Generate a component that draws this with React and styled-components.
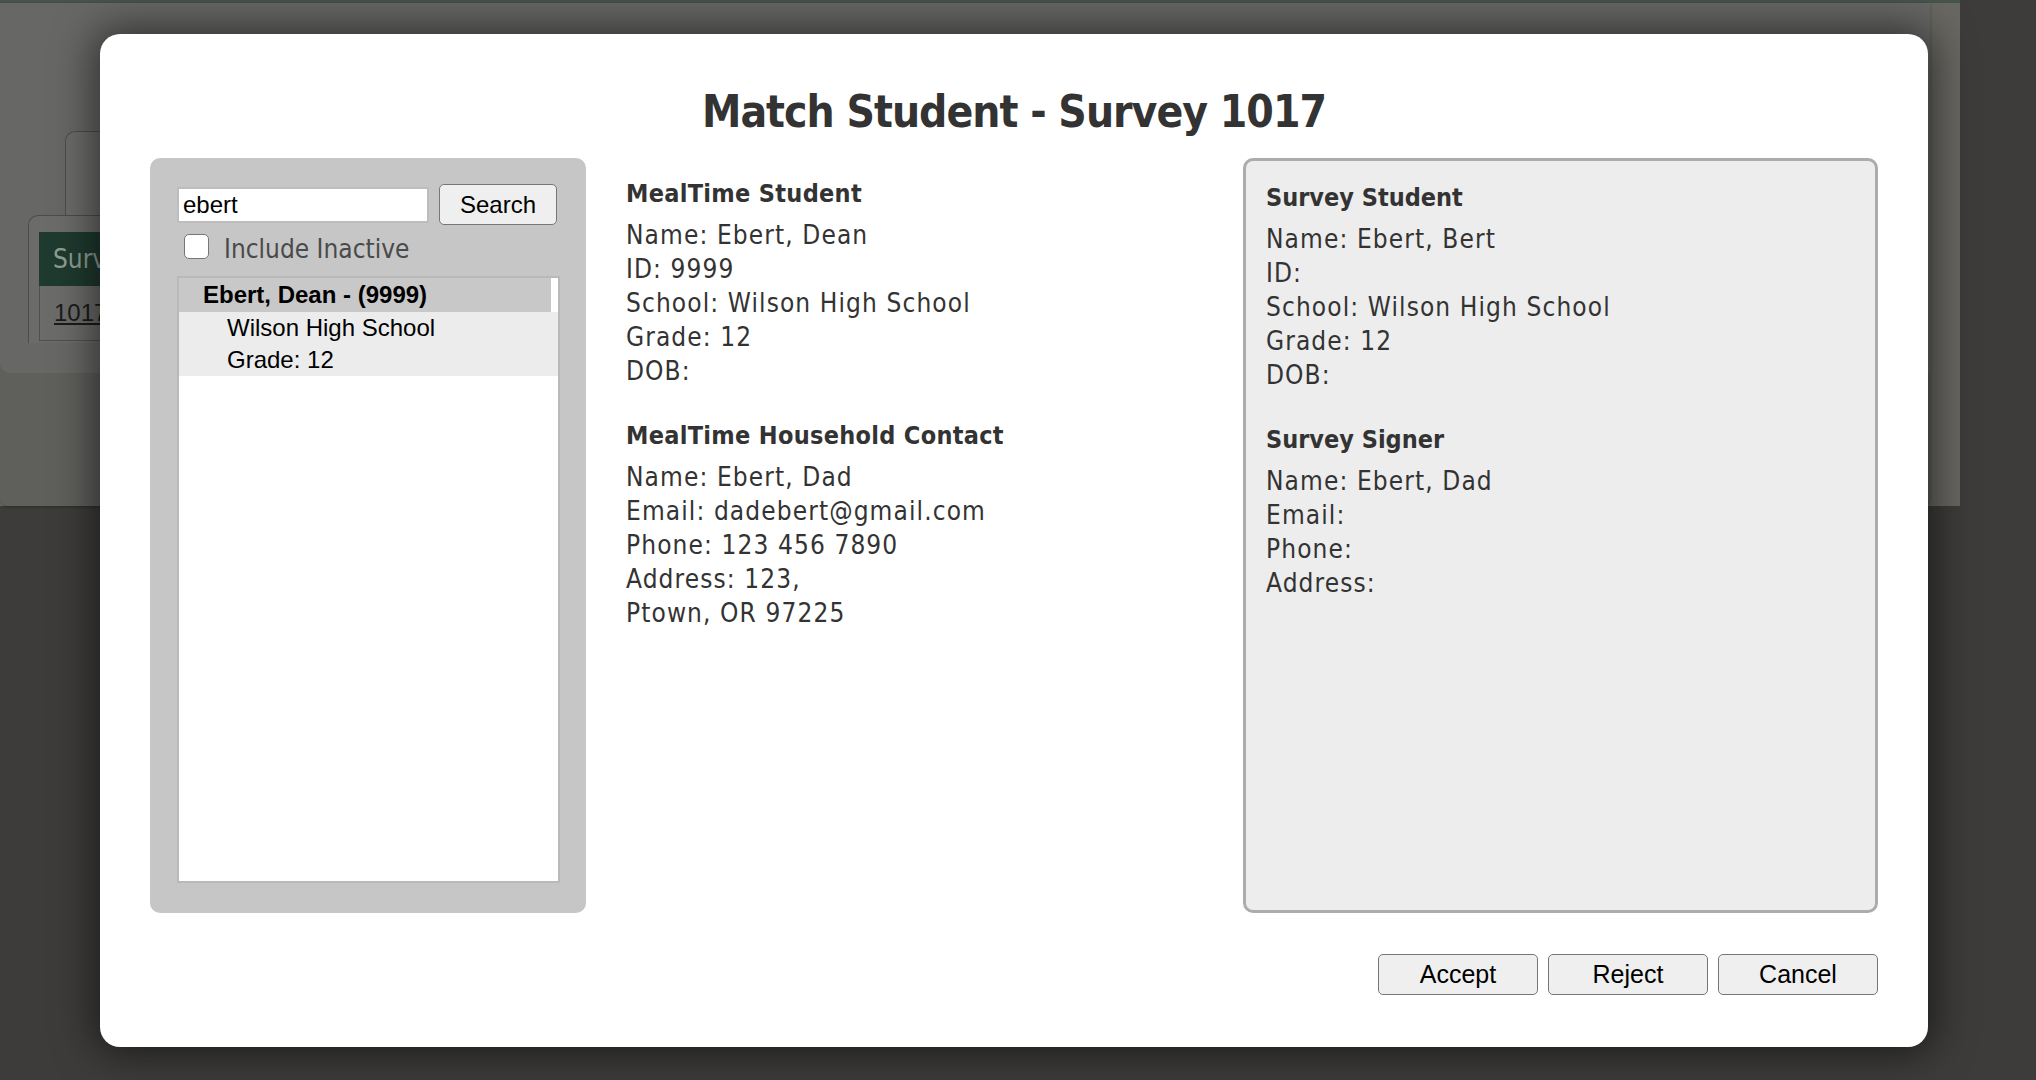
import React from 'react';
import styled, { createGlobalStyle } from 'styled-components';

const SANS = `"DejaVu Sans Condensed", "DejaVu Sans", sans-serif`;
const ARIAL = `"Liberation Sans", Arial, sans-serif`;

const GlobalStyle = createGlobalStyle`
  html, body { margin: 0; padding: 0; }
  body {
    width: 2036px; height: 1080px; overflow: hidden;
    background: #3d3c3a;
    font-family: ${SANS};
  }
  * { box-sizing: border-box; }
`;

const Screen = styled.div`
  position: relative;
  width: 2036px;
  height: 1080px;
`;

const UnderPage = styled.div`
  width: 1960px;
  height: 506px;
  background: #686762;
  border-top: 3px solid #46544d;
`;

const UnderCard = styled.div`
  width: 1930px;
  height: 503px;
  background: #5f5f5c;
  border-radius: 0 0 8px 8px;
  box-shadow: 0 1px 3px rgba(0, 0, 0, 0.3);
`;

const UnderInner = styled.div`
  height: 370px;
  background: #676765;
  border-radius: 0 0 0 10px;
  padding: 128px 0 0 28px;
`;

const UnderTab = styled.div`
  margin-left: 37px;
  width: 420px;
  height: 84px;
  background: #6b6b69;
  border: 1px solid #4c4c4a;
  border-bottom: none;
  border-radius: 10px 0 0 0;
`;

const UnderTabBody = styled.div`
  width: 700px;
  height: 128px;
  background: #6b6b69;
  border-top: 1px solid #4c4c4a;
  border-left: 1px solid #4c4c4a;
  border-radius: 10px 0 0 0;
  padding: 16px 0 0 10px;
`;

const UnderTableHead = styled.div`
  height: 54px;
  background: #1f3a2e;
  color: #8e9d94;
  font: 26px/54px ${SANS};
  padding-left: 14px;
`;

const UnderTableRow = styled.div`
  height: 55px;
  border: 1px solid #505050;
  border-top: none;
  font: 24px/54px ${ARIAL};
  padding-left: 14px;
  color: #1b1b1b;
  text-decoration: underline;
`;

const Modal = styled.div`
  position: absolute;
  left: 100px;
  top: 34px;
  width: 1828px;
  height: 1013px;
  background: #fff;
  border-radius: 20px;
  box-shadow: 0 0 40px 6px rgba(0, 0, 0, 0.55);
  padding: 51px 50px 0;
  display: flex;
  flex-direction: column;
`;

const Title = styled.h1`
  margin: 0 0 19px;
  text-align: center;
  font: bold 44px/54px ${SANS};
  letter-spacing: -1px;
  color: #333;
`;

const Columns = styled.div`
  display: grid;
  grid-template-columns: 436px 1fr 635px;
  height: 755px;
`;

const SearchPanel = styled.div`
  background: #c6c6c6;
  border-radius: 10px;
  padding: 26px 26px 30px 27px;
  display: flex;
  flex-direction: column;
`;

const SearchRow = styled.div`
  display: flex;
  align-items: center;
  gap: 10px;
  height: 41px;
`;

const SearchInput = styled.input`
  width: 252px;
  height: 36px;
  border: 2px solid #bdbdbd;
  background: #fff;
  font: 24px ${ARIAL};
  color: #000;
  padding: 0 4px;
  outline: none;
`;

const PlainButton = styled.button`
  width: ${(p) => p.$w}px;
  height: 41px;
  padding: 0;
  background: #efefef;
  border: 1px solid #767676;
  border-radius: 5px;
  font: ${(p) => p.$fs}px ${ARIAL};
  color: #000;
`;

const CheckRow = styled.label`
  display: flex;
  align-items: center;
  gap: 15px;
  margin-top: 8px;
  padding-left: 7px;
  height: 26px;
`;

const Check = styled.input`
  appearance: none;
  margin: 0;
  width: 25px;
  height: 25px;
  border: 1.5px solid #767676;
  border-radius: 5px;
  background: #fff;
`;

const CheckText = styled.span`
  padding-top: 6px;
  font: 26px ${SANS};
  color: #4a4a4a;
`;

const ResultList = styled.div`
  margin-top: 17px;
  flex: 1;
  background: #fff;
  border: 2px solid #b9b9b9;
`;

const ResultName = styled.div`
  margin-right: 7px;
  height: 34px;
  background: #c8c8c8;
  padding-left: 24px;
  font: bold 24px/34px ${ARIAL};
  color: #000;
`;

const ResultDetails = styled.div`
  background: #ececec;
  padding-left: 48px;
  font: 24px/32px ${ARIAL};
  color: #000;
`;

const MidColumn = styled.div`
  padding: 19px 0 0 40px;
`;

const InfoPanel = styled.div`
  background: #ededed;
  border: 3px solid #acacac;
  border-radius: 10px;
  padding: 20px 0 0 20px;
`;

const Section = styled.div`
  & + & {
    margin-top: 31px;
  }
`;

const SectionTitle = styled.div`
  font: bold 25px/34px ${SANS};
  letter-spacing: ${(p) => (p.$tight ? 0 : 0.3)}px;
  color: #333;
  margin-bottom: 7px;
`;

const InfoLine = styled.div`
  font: 26px/34px ${SANS};
  letter-spacing: 1.1px;
  color: #333;
`;

const Footer = styled.div`
  display: flex;
  justify-content: flex-end;
  gap: 10px;
  margin-top: 41px;
`;

function InfoSection({ title, lines, tight }) {
  return (
    <Section>
      <SectionTitle $tight={tight}>{title}</SectionTitle>
      {lines.map((l, i) => (
        <InfoLine key={i}>{l}</InfoLine>
      ))}
    </Section>
  );
}

export default function App() {
  return (
    <>
      <GlobalStyle />
      <Screen>
        <UnderPage>
          <UnderCard>
            <UnderInner>
              <UnderTab />
              <UnderTabBody>
                <UnderTableHead>Survey</UnderTableHead>
                <UnderTableRow>1017</UnderTableRow>
              </UnderTabBody>
            </UnderInner>
          </UnderCard>
        </UnderPage>

        <Modal>
          <Title>Match Student - Survey 1017</Title>
          <Columns>
            <SearchPanel>
              <SearchRow>
                <SearchInput defaultValue="ebert" />
                <PlainButton $w={118} $fs={24}>Search</PlainButton>
              </SearchRow>
              <CheckRow>
                <Check type="checkbox" />
                <CheckText>Include Inactive</CheckText>
              </CheckRow>
              <ResultList>
                <ResultName>Ebert, Dean - (9999)</ResultName>
                <ResultDetails>
                  <div>Wilson High School</div>
                  <div>Grade: 12</div>
                </ResultDetails>
              </ResultList>
            </SearchPanel>

            <MidColumn>
              <InfoSection
                title="MealTime Student"
                lines={['Name: Ebert, Dean', 'ID: 9999', 'School: Wilson High School', 'Grade: 12', 'DOB:']}
              />
              <InfoSection
                title="MealTime Household Contact"
                lines={['Name: Ebert, Dad', 'Email: dadebert@gmail.com', 'Phone: 123 456 7890', 'Address: 123,', 'Ptown, OR 97225']}
              />
            </MidColumn>

            <InfoPanel>
              <InfoSection
                tight
                title="Survey Student"
                lines={['Name: Ebert, Bert', 'ID:', 'School: Wilson High School', 'Grade: 12', 'DOB:']}
              />
              <InfoSection
                tight
                title="Survey Signer"
                lines={['Name: Ebert, Dad', 'Email:', 'Phone:', 'Address:']}
              />
            </InfoPanel>
          </Columns>
          <Footer>
            <PlainButton $w={160} $fs={25}>Accept</PlainButton>
            <PlainButton $w={160} $fs={25}>Reject</PlainButton>
            <PlainButton $w={160} $fs={25}>Cancel</PlainButton>
          </Footer>
        </Modal>
      </Screen>
    </>
  );
}
